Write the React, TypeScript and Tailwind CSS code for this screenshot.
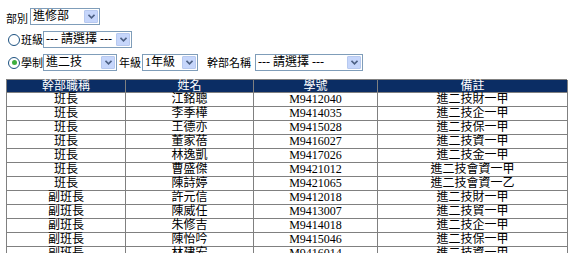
const rows = [
  ["班長", "江銘聰", "M9412040", "進二技財一甲"],
  ["班長", "李季樺", "M9414035", "進二技企一甲"],
  ["班長", "王德亦", "M9415028", "進二技保一甲"],
  ["班長", "董家蓓", "M9416027", "進二技資一甲"],
  ["班長", "林逸凱", "M9417026", "進二技金一甲"],
  ["班長", "曹盛傑", "M9421012", "進二技會資一甲"],
  ["班長", "陳詩婷", "M9421065", "進二技會資一乙"],
  ["副班長", "許元信", "M9412018", "進二技財一甲"],
  ["副班長", "陳威任", "M9413007", "進二技貿一甲"],
  ["副班長", "朱修吉", "M9414018", "進二技企一甲"],
  ["副班長", "陳怡吟", "M9415046", "進二技保一甲"],
  ["副班長", "林建宏", "M9416014", "進二技資一甲"],
];

const headers = ["幹部職稱", "姓名", "學號", "備註"];

const font = { fontFamily: '"Liberation Serif", "Noto Sans CJK TC", serif' };

const Select = ({ value, w }: { value: string; w: string }) => (
  <div className={`flex h-[17px] shrink-0 items-center border border-[#7f9db9] bg-white ${w}`}>
    <span className="flex-1 truncate whitespace-nowrap pl-[2px] text-[12px] leading-[15px] text-black">{value}</span>
    <span className="m-[1px] flex h-[13px] w-[14px] items-center justify-center rounded-[1px] border border-[#b7c9ef] bg-[#c6d6fb]">
      <svg width="7" height="5" viewBox="0 0 7 5">
        <path d="M0.5 0.8 L3.5 3.8 L6.5 0.8" fill="none" stroke="#4d6185" strokeWidth="1.6" />
      </svg>
    </span>
  </div>
);

const Radio = ({ checked }: { checked?: boolean }) => (
  <span className="mr-[1px] ml-[2px] flex h-[12px] w-[12px] shrink-0 items-center justify-center rounded-full border border-[#1c5180] bg-white">
    {checked && <span className="h-[5px] w-[5px] rounded-full bg-[#3fae3f]" />}
  </span>
);

const Label = ({ text, w }: { text: string; w: string }) => (
  <span className={`shrink-0 whitespace-nowrap text-[11px] leading-[12px] ${w}`}>{text}</span>
);

export default function App() {
  return (
    <div className="h-[253px] w-[570px] overflow-hidden bg-white pl-[6px] text-[12px] text-black" style={font}>
      <div className="mt-[8px] flex h-[17px] items-center">
        <span className="mt-[4px] w-[24px] shrink-0 whitespace-nowrap text-[11px] leading-[12px]">部別</span>
        <Select value="進修部" w="w-[70px]" />
      </div>
      <div className="mt-[6px] flex h-[17px] items-center">
        <Radio />
        <Label text="班級" w="w-[22px]" />
        <Select value="--- 請選擇 ---" w="w-[89px]" />
      </div>
      <div className="mt-[6px] flex h-[17px] items-center">
        <Radio checked />
        <Label text="學制" w="w-[22px]" />
        <Select value="進二技" w="w-[74px]" />
        <Label text="年級" w="ml-[2px] w-[23px]" />
        <Select value="1年級" w="w-[56px]" />
        <Label text="幹部名稱" w="ml-[9px] w-[48px]" />
        <Select value="--- 請選擇 ---" w="w-[108px]" />
      </div>
      <div className="mt-[8px] w-[561px] border-l border-t border-[#808080]">
        <div className="grid grid-cols-[119px_128px_124px_190px] bg-[#0b2d64] text-white">
          {headers.map((h) => (
            <div key={h} className="h-[13px] border-r border-b border-[#808080] text-center text-[12px] leading-[12px] whitespace-nowrap">
              {h}
            </div>
          ))}
        </div>
        {rows.map((r, i) => (
          <div key={i} className="grid grid-cols-[119px_128px_124px_190px]">
            {r.map((c, j) => (
              <div key={j} className="h-[14px] border-r border-b border-[#808080] text-center text-[12px] leading-[13px] whitespace-nowrap">
                {c}
              </div>
            ))}
          </div>
        ))}
      </div>
    </div>
  );
}
